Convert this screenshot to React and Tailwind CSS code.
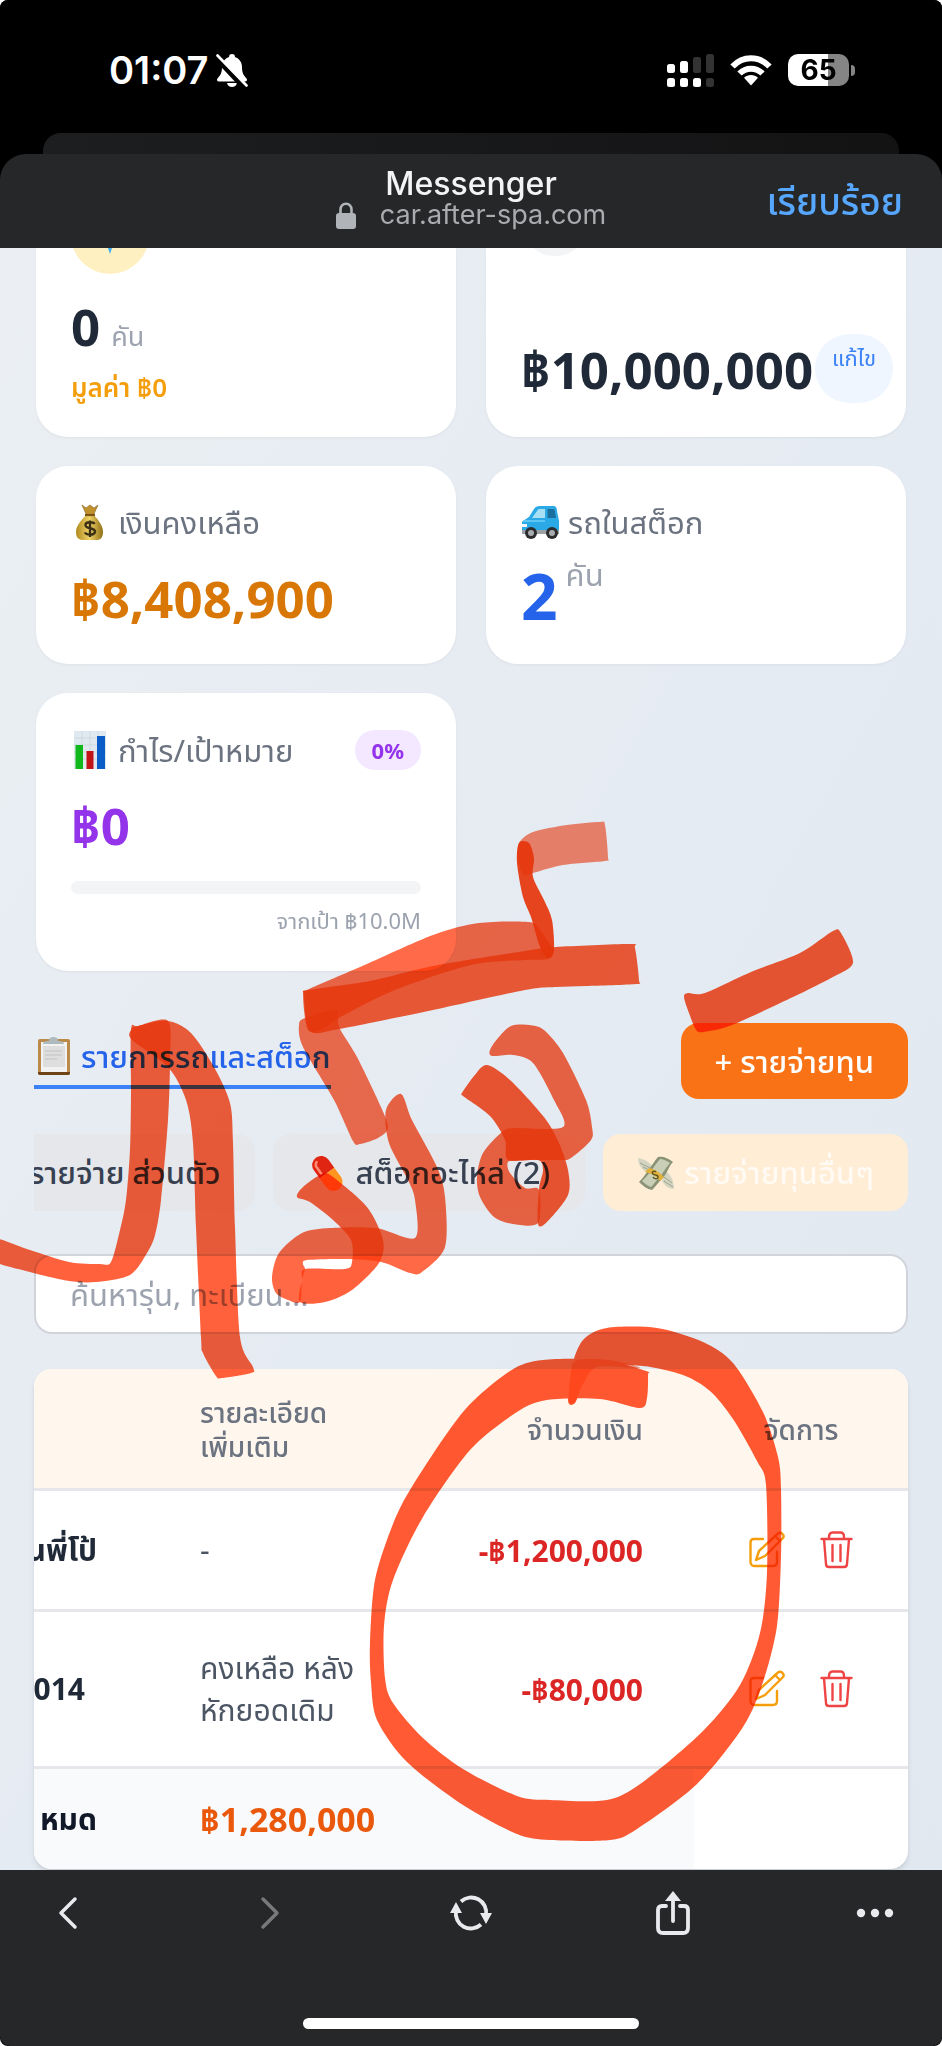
const EXPENSES = [
  { id: 1, name: 'นพี่โป้', nameClass: '', detail: ['-'], amount: '-฿1,200,000' },
  { id: 2, name: '014', nameClass: 'pr-[12px]', detail: ['คงเหลือ หลัง', 'หักยอดเดิม'], amount: '-฿80,000' },
];

// Closed marker outlines, in page coordinates
const INK = [
  {
    opacity: 0.8,
    pts: [[-8, 1238], [30, 1250], [69, 1262], [100, 1264], [111, 1262], [120, 1230], [126, 1200], [130, 1150], [131, 1093], [131, 1030], [138, 1026], [168, 1021], [170, 1060], [168, 1120], [161, 1200], [155, 1235], [147, 1253], [130, 1275], [96, 1282], [69, 1281], [30, 1272], [-8, 1260]],
  },
  {
    opacity: 0.8,
    pts: [[131, 1030], [138, 1026], [168, 1021], [191, 1033], [214, 1067], [230, 1103], [233, 1143], [235, 1227], [240, 1337], [253, 1367], [251, 1373], [222, 1378], [216, 1376], [203, 1353], [201, 1337], [196, 1227], [193, 1143], [186, 1100], [168, 1067], [132, 1040]],
  },
  {
    opacity: 0.72,
    pts: [[305, 1018], [299, 1025], [303, 1047], [334, 1100], [353, 1141], [360, 1144], [378, 1138], [388, 1128], [381, 1107], [357, 1057], [339, 1027], [336, 1010]],
  },
  {
    opacity: 0.75,
    pts: [[303, 994], [309, 989], [360, 967], [433, 935], [479, 923], [529, 922], [540, 930], [553, 950], [548, 959], [525, 960], [471, 965], [395, 990], [339, 1018], [325, 1028], [308, 1030]],
  },
  {
    opacity: 0.82,
    pts: [[304, 995], [309, 990], [370, 981], [433, 966], [525, 951], [556, 947], [630, 944], [635, 948], [639, 980], [636, 984], [586, 986], [556, 987], [525, 990], [433, 1010], [339, 1029], [310, 1031]],
  },
  {
    opacity: 0.6,
    pts: [[533, 873], [563, 865], [605, 861], [608, 857], [605, 825], [600, 822], [567, 825], [533, 832], [519, 843], [518, 860], [524, 875]],
  },
  {
    opacity: 0.92,
    pts: [[519, 843], [529, 843], [534, 858], [533, 877], [544, 900], [552, 920], [554, 950], [548, 958], [540, 947], [531, 917], [523, 897], [517, 863]],
  },
  {
    opacity: 0.84,
    pts: [[684, 997], [688, 993], [705, 993], [751, 972], [800, 953], [833, 931], [841, 933], [853, 963], [831, 978], [793, 997], [732, 1025], [709, 1031], [697, 1031], [689, 1013]],
  },
  {
    opacity: 0.76,
    pts: [[386, 1110], [401, 1094], [412, 1120], [437, 1167], [445, 1197], [445, 1247], [422, 1272], [410, 1273], [381, 1262], [345, 1259], [307, 1260], [303, 1264], [305, 1269], [302, 1280], [300, 1302], [288, 1300], [276, 1293], [272, 1277], [279, 1253], [302, 1233], [330, 1228], [376, 1228], [415, 1238], [415, 1200], [408, 1180], [389, 1143]],
  },
  {
    opacity: 0.8,
    pts: [[297, 1197], [303, 1187], [322, 1174], [333, 1177], [367, 1207], [383, 1240], [379, 1263], [352, 1290], [325, 1302], [300, 1302], [302, 1280], [305, 1269], [345, 1269], [352, 1262], [351, 1240], [333, 1220], [310, 1202]],
  },
  {
    opacity: 0.76,
    pts: [[490, 1050], [498, 1038], [511, 1026], [529, 1025], [544, 1030], [563, 1053], [586, 1100], [592, 1127], [591, 1140], [571, 1158], [559, 1160], [520, 1160], [508, 1162], [510, 1173], [525, 1188], [539, 1190], [538, 1223], [513, 1224], [494, 1217], [480, 1197], [477, 1177], [483, 1153], [502, 1132], [515, 1128], [563, 1127], [554, 1100], [533, 1063], [513, 1055], [492, 1056]],
  },
  {
    opacity: 0.84,
    pts: [[462, 1093], [474, 1076], [487, 1065], [510, 1080], [544, 1117], [559, 1143], [568, 1170], [568, 1195], [547, 1222], [538, 1224], [539, 1189], [543, 1170], [538, 1160], [508, 1160], [505, 1140], [490, 1116], [463, 1096]],
  },
  {
    opacity: 0.84,
    pts: [[568, 1401], [572, 1366], [583, 1340], [607, 1328], [657, 1328], [703, 1342], [733, 1363], [763, 1412], [778, 1457], [781, 1489], [781, 1556], [777, 1626], [763, 1682], [743, 1727], [697, 1784], [637, 1829], [610, 1840], [550, 1840], [517, 1834], [463, 1805], [407, 1762], [377, 1720], [371, 1682], [370, 1643], [375, 1580], [393, 1524], [413, 1485], [463, 1412], [510, 1371], [543, 1360], [603, 1360], [646, 1371], [648, 1375], [647, 1398], [640, 1408], [600, 1399], [547, 1400], [517, 1412], [470, 1450], [423, 1517], [393, 1580], [384, 1626], [385, 1678], [393, 1703], [423, 1738], [463, 1769], [517, 1796], [550, 1800], [607, 1800], [643, 1782], [703, 1731], [740, 1685], [760, 1633], [767, 1573], [766, 1485], [757, 1461], [733, 1419], [710, 1391], [683, 1375], [643, 1366], [597, 1366], [583, 1384], [575, 1403]],
  },
  {
    opacity: 0.5,
    pts: [[569, 1400], [571, 1372], [577, 1360], [610, 1360], [640, 1368], [597, 1367], [583, 1384], [575, 1402]],
  },
];

function smoothPath(pts) {
  const n = pts.length;
  let d = `M${pts[0][0]} ${pts[0][1]}`;
  for (let i = 0; i < n; i++) {
    const [a, b, c, e] = [pts[(i - 1 + n) % n], pts[i], pts[(i + 1) % n], pts[(i + 2) % n]];
    d += `C${b[0] + (c[0] - a[0]) / 7} ${b[1] + (c[1] - a[1]) / 7} ${c[0] - (e[0] - b[0]) / 7} ${c[1] - (e[1] - b[1]) / 7} ${c[0]} ${c[1]}`;
  }
  return d + 'Z';
}

export default function App() {
  return (
    <div className="relative min-h-screen flex flex-col overflow-hidden rounded-[8px] bg-black font-['Noto_Sans','Noto_Sans_Thai','Sarabun','Loma',sans-serif]">
      <StatusBar />
      <SheetHeader />

      <main className="flex-1 bg-linear-to-br from-[#ebeff3] via-[#e5ebf2] to-[#e1e8f0] px-[34px]">
        <div className="grid grid-cols-2 gap-x-[30px] gap-y-[29px] px-[2px]">
          {/* Sold cars */}
          <div className="bg-white rounded-b-[32px] px-[35px] pb-[30px] shadow-[0_1px_3px_rgba(0,0,0,0.05)]">
            <div className="h-[26px] overflow-hidden flex flex-col justify-end">
              <div className="w-[78px] h-[78px] shrink-0 rounded-full bg-[#fef0c0] flex flex-col items-center justify-end pb-[20px]">
                <svg width="12" height="18" viewBox="0 0 12 18" aria-hidden="true"><path d="M0 0H12L6 18Z" fill="#38aef5" /></svg>
              </div>
            </div>
            <p className="mt-[22px] h-[64px] flex items-baseline gap-[11px] leading-[60px]">
              <span className="text-[51px] font-bold text-[#1f2937]">0</span>
              <span className="text-[27px] text-[#9ca3af]">คัน</span>
            </p>
            <p className="mt-[7px] text-[26px] leading-[40px] font-semibold text-[#f59e0b]">มูลค่า ฿0</p>
          </div>

          {/* Capital */}
          <div className="bg-white rounded-b-[32px] pl-[35px] pr-[13px] pb-[33px] shadow-[0_1px_3px_rgba(0,0,0,0.05)]">
            <div className="h-[8px] overflow-hidden flex flex-col justify-end">
              <div className="w-[68px] h-[68px] shrink-0 rounded-full bg-gray-100" />
            </div>
            <div className="mt-[77px] flex items-center justify-between h-[71px]">
              <p className="text-[51px] leading-[64px] font-bold text-[#1f2937]">฿10,000,000</p>
              <button className="w-[78px] h-[69px] shrink-0 rounded-full bg-[#eff6ff] text-[#3b82f6] text-[22px] leading-[30px] pb-[24px]">แก้ไข</button>
            </div>
          </div>

          {/* Balance */}
          <div className="bg-white rounded-[32px] px-[35px] pt-[31px] pb-[34px] shadow-[0_1px_3px_rgba(0,0,0,0.05)]">
            <h3 className="flex items-center gap-[10px] text-[31px] leading-[50px] text-[#6b7280]">
              <MoneyBagIcon /> เงินคงเหลือ
            </h3>
            <p className="mt-[19px] text-[51px] leading-[64px] font-bold text-[#d97706]">฿8,408,900</p>
          </div>

          {/* Cars in stock */}
          <div className="bg-white rounded-[32px] px-[35px] pt-[31px] pb-[34px] shadow-[0_1px_3px_rgba(0,0,0,0.05)]">
            <h3 className="flex items-center gap-[8px] text-[31px] leading-[50px] text-[#6b7280]">
              <CarIcon /> รถในสต็อก
            </h3>
            <p className="mt-[15px] flex gap-[8px]">
              <span className="text-[64px] leading-[68px] font-bold text-[#2563eb]">2</span>
              <span className="text-[31px] leading-[24px] text-[#9ca3af]">คัน</span>
            </p>
          </div>

          {/* Profit / target */}
          <div className="bg-white rounded-[32px] px-[35px] pt-[32px] pb-[32px] shadow-[0_1px_3px_rgba(0,0,0,0.05)]">
            <div className="flex items-center justify-between">
              <h3 className="flex items-center gap-[10px] text-[31px] leading-[50px] text-[#6b7280]">
                <ChartIcon /> กำไร/เป้าหมาย
              </h3>
              <span className="rounded-full bg-[#f3e8ff] px-[17px] text-[22px] leading-[40px] font-bold text-[#9333ea]">0%</span>
            </div>
            <p className="mt-[18px] text-[51px] leading-[64px] font-bold text-[#9333ea]">฿0</p>
            <div className="mt-[24px] h-[13px] rounded-full bg-[#f3f4f6]" />
            <p className="mt-[7px] text-right text-[22px] leading-[38px] text-[#9ca3af]">จากเป้า ฿10.0M</p>
          </div>
        </div>

        <div className="mt-[52px] flex items-center justify-between">
          <a href="#stock" className="flex items-center gap-[10px] border-b-4 border-[#3b82f6] pb-[6px] text-[31px] leading-[46px] font-medium text-[#2563eb]">
            <ClipboardIcon /> รายการรถและสต็อก
          </a>
          <button className="rounded-[18px] bg-[#f97316] px-[34px] text-[31px] leading-[76px] font-medium text-white">+ รายจ่ายทุน</button>
        </div>

        <div className="mt-[35px] flex justify-end gap-[18px] overflow-hidden whitespace-nowrap text-[31px] leading-[77px] font-medium">
          <button className="shrink-0 rounded-[18px] bg-[#e5e7eb] px-[35px] text-[#374151]">รายจ่าย ส่วนตัว</button>
          <button className="shrink-0 flex items-center gap-[10px] rounded-[18px] bg-[#e5e7eb] px-[35px] text-[#374151]">
            <PillIcon /> สต็อกอะไหล่ (2)
          </button>
          <button className="shrink-0 flex items-center gap-[9px] rounded-[18px] bg-[#ffedd5] px-[34px] text-[#fffaf3]">
            <FlyingMoneyIcon /> รายจ่ายทุนอื่นๆ
          </button>
        </div>

        <input
          type="text"
          aria-label="ค้นหา"
          placeholder="ค้นหารุ่น, ทะเบียน..."
          className="mt-[43px] block h-[80px] w-full rounded-[18px] border-2 border-[#d1d5db] bg-white px-[34px] text-[31px] text-[#374151] placeholder:text-[#9ca3af]"
        />

        <div className="mt-[35px] overflow-hidden rounded-[18px] bg-white shadow-md">
          <table className="w-full table-fixed border-separate border-spacing-0 text-left">
            <colgroup>
              <col className="w-[131px]" />
              <col className="w-[220px]" />
              <col />
              <col className="w-[214px]" />
            </colgroup>
            <thead>
              <tr className="bg-[#fff7ed] text-[28px] leading-[34px] text-[#6b7280]">
                <th className="border-b-[3px] border-[#e5e7eb]" />
                <th className="h-[122px] border-b-[3px] border-[#e5e7eb] pl-[35px] font-medium">รายละเอียด<br />เพิ่มเติม</th>
                <th className="border-b-[3px] border-[#e5e7eb] pr-[51px] text-right font-medium">จำนวนเงิน</th>
                <th className="border-b-[3px] border-[#e5e7eb] text-center font-medium">จัดการ</th>
              </tr>
            </thead>
            <tbody>
              {EXPENSES.map((item) => (
                <tr key={item.id}>
                  <td className="border-b-[3px] border-[#e5e7eb]">
                    <div className={`flex w-[63px] justify-end overflow-hidden whitespace-nowrap text-[30px] leading-[50px] font-bold text-[#1f2937] ${item.nameClass}`}>
                      {item.name}
                    </div>
                  </td>
                  <td className="h-[121px] border-b-[3px] border-[#e5e7eb] py-[35px] pl-[35px] text-[30px] leading-[42px] text-[#4b5563] whitespace-nowrap">
                    {item.detail.map((line) => <p key={line}>{line}</p>)}
                  </td>
                  <td className="border-b-[3px] border-[#e5e7eb] pr-[51px] text-right text-[30px] font-bold text-[#dc2626] whitespace-nowrap">{item.amount}</td>
                  <td className="border-b-[3px] border-[#e5e7eb]">
                    <div className="flex justify-center gap-[35px]">
                      <button aria-label="แก้ไข" className="text-[#f59e0b]"><EditIcon /></button>
                      <button aria-label="ลบ" className="text-[#ef4444]"><TrashIcon /></button>
                    </div>
                  </td>
                </tr>
              ))}
              <tr>
                <td className="h-[100px] bg-[#f8fafc]">
                  <div className="flex w-[63px] justify-end whitespace-nowrap text-[30px] leading-[50px] font-bold text-[#111827]">หมด</div>
                </td>
                <td colSpan={2} className="bg-[#f8fafc] pl-[35px] text-[34px] font-bold text-[#ea580c]">฿1,280,000</td>
                <td />
              </tr>
            </tbody>
          </table>
        </div>
      </main>

      <BottomBar />

      {/* Marker scribble */}
      <svg viewBox="0 0 942 2046" className="pointer-events-none absolute top-0 left-0 w-full mix-blend-multiply" aria-hidden="true">
        {INK.map((s, i) => (
          <path key={i} d={smoothPath(s.pts)} fill="#ff3a0c" fillOpacity={s.opacity} />
        ))}
      </svg>
    </div>
  );
}

function StatusBar() {
  return (
    <header className="bg-black font-['Inter',sans-serif] text-white">
      <div className="flex h-[133px] items-center justify-between pt-[7px] pr-[87px] pl-[109px]">
        <div className="flex items-center gap-[8px]">
          <span className="text-[38px] leading-[44px] font-semibold">01:07</span>
          <svg width="32" height="34" viewBox="0 0 32 34" aria-hidden="true">
            <path d="M16 1c-2 0-3 1.300-3 3C8.500 5.500 6 9.500 6 14c0 6-1.500 8-4.500 11.500-1 1.500-.5 3 1.500 3h26c2 0 2.500-1.500 1.500-3C27.500 22 26 20 26 14c0-4.500-2.500-8.500-7-10 0-1.700-1-3-3-3Z" fill="#fff" />
            <path d="M11 30h10c-.5 2.500-2.500 4-5 4s-4.500-1.500-5-4Z" fill="#fff" />
            <path d="M0 4 29 35" stroke="#000" strokeWidth="6" />
            <path d="M1.500 2.500 30.500 32.500" stroke="#fff" strokeWidth="2.600" strokeLinecap="round" />
          </svg>
        </div>
        <div className="flex items-center gap-[16px]">
          <svg width="47" height="33" viewBox="0 0 47 33" aria-hidden="true">
            <g fill="#fff">
              <rect x="0" y="10" width="8" height="9" rx="2.500" />
              <rect x="13" y="7" width="8" height="12" rx="2.500" />
              <rect x="0" y="24" width="8" height="9" rx="2.500" />
              <rect x="13" y="24" width="8" height="9" rx="2.500" />
              <rect x="26" y="24" width="8" height="9" rx="2.500" />
            </g>
            <g fill="#333">
              <rect x="26" y="3" width="8" height="16" rx="2.500" />
              <rect x="39" y="0" width="8" height="19" rx="2.500" />
              <rect x="39" y="24" width="8" height="9" rx="2.500" />
            </g>
          </svg>
          <svg width="42" height="31" viewBox="0 0 42 31" fill="none" stroke="#fff" strokeWidth="6" aria-hidden="true">
            <path d="M2.500 11.500C13 .5 29 .5 39.500 11.500" />
            <path d="M9.500 18.500C16 12 26 12 32.500 18.500" />
            <path d="M14 22.800c4-3.700 10-3.700 14 0L21 30.500Z" fill="#fff" stroke="none" />
          </svg>
          <div className="flex items-center gap-[2px]">
            <div className="flex h-[32px] w-[61px] items-center justify-center rounded-[10px] bg-linear-to-r from-white from-65% to-[#858585] to-65% text-[28px] leading-[32px] font-bold text-black">65</div>
            <div className="h-[11px] w-[4px] rounded-r-full bg-[#858585]" />
          </div>
        </div>
      </div>
      <div className="mx-[43px] h-[21px] rounded-t-[18px] bg-linear-to-r from-[#1d1e20] to-[#131314]" />
    </header>
  );
}

function SheetHeader() {
  return (
    <div className="grid h-[94px] grid-cols-[1fr_auto_1fr] items-center rounded-t-[26px] bg-[#252729]">
      <span />
      <div className="pb-[7px] text-center font-['Inter',sans-serif]">
        <h1 className="text-[32px] leading-[35px] font-medium text-gray-100">Messenger</h1>
        <p className="flex items-center justify-center gap-[24px] text-[27px] leading-[28px] text-[#a9abae]">
          <svg width="20" height="27" viewBox="0 0 20 27" aria-hidden="true">
            <rect x="0" y="11" width="20" height="16" rx="3" fill="#b0b3b8" />
            <path d="M4.500 12V7.500C4.500 4 6.800 1.800 10 1.800S15.500 4 15.500 7.500V12" fill="none" stroke="#b0b3b8" strokeWidth="2.600" />
          </svg>
          car.after-spa.com
        </p>
      </div>
      <button className="justify-self-end pr-[39px] text-[37px] leading-[50px] font-medium text-[#57a7ff]">เรียบร้อย</button>
    </div>
  );
}

function BottomBar() {
  return (
    <footer className="flex h-[176px] flex-col items-center justify-between rounded-b-[10px] bg-[#252729] pb-[17px]">
      <nav className="flex h-[86px] w-full items-center justify-between px-[45px] text-[#e8eaed]">
        <button aria-label="Back" className="flex w-[44px] justify-center">
          <svg width="38" height="38" viewBox="0 0 38 38" fill="none" stroke="currentColor" strokeWidth="3.500" strokeLinecap="round" strokeLinejoin="round"><path d="M27 5 13 19l14 14" /></svg>
        </button>
        <button aria-label="Forward" className="flex w-[44px] justify-center text-[#77797b]">
          <svg width="38" height="38" viewBox="0 0 38 38" fill="none" stroke="currentColor" strokeWidth="3.500" strokeLinecap="round" strokeLinejoin="round"><path d="m13 5 14 14-14 14" /></svg>
        </button>
        <button aria-label="Reload" className="flex w-[44px] justify-center">
          <svg width="44" height="38" viewBox="0 0 44 38" fill="none" stroke="currentColor" strokeWidth="3.800">
            <path d="M12 7.500A15 15 0 0 1 37 21" />
            <path d="M32 30.500A15 15 0 0 1 7 17" />
            <path d="M31 19h12l-6 11Z M1 19h12L7 8Z" fill="currentColor" stroke="none" />
          </svg>
        </button>
        <button aria-label="Share" className="flex w-[44px] justify-center">
          <svg width="36" height="46" viewBox="0 0 36 46" fill="none" stroke="currentColor" strokeWidth="3.800" strokeLinecap="round" strokeLinejoin="round">
            <path d="M11 16H7c-3 0-4 1.500-4 4v18c0 3 1.500 5 5 5h20c3.500 0 5-2 5-5V20c0-2.500-1-4-4-4h-4" />
            <path d="M18 31V8" />
            <path d="M10 11 18 1l8 10Z" fill="currentColor" stroke="none" />
          </svg>
        </button>
        <button aria-label="More" className="flex w-[44px] justify-center">
          <svg width="38" height="10" viewBox="0 0 38 10" fill="currentColor"><circle cx="5" cy="5" r="4.200" /><circle cx="19" cy="5" r="4.200" /><circle cx="33" cy="5" r="4.200" /></svg>
        </button>
      </nav>
      <div className="h-[11px] w-[336px] rounded-full bg-white" />
    </footer>
  );
}

function EditIcon() {
  return (
    <svg width="36" height="38" viewBox="0 0 36 38" fill="none" stroke="currentColor" strokeWidth="2.400" strokeLinecap="round" strokeLinejoin="round">
      <path d="M14 8H5C3 8 1.500 9.500 1.500 11.500V31C1.500 33 3 35 5 35H24C26.500 35 28 33.500 28 31V21" />
      <path d="M7 29 10 20 29 2.500C32 .5 36 4 34 7L16 25Z" />
      <path d="m26 5 5 5" />
    </svg>
  );
}

function TrashIcon() {
  return (
    <svg width="33" height="38" viewBox="0 0 33 38" fill="none" stroke="currentColor" strokeWidth="2.400" strokeLinecap="round" strokeLinejoin="round">
      <path d="M1.500 8h30M9 8V6c0-3 1.500-4.500 3.500-4.500h8C22.500 1.500 24 3 24 6v2M4 8l2 25c0 2 1.500 3 3 3h15c1.500 0 3-1 3-3L29 8M12.500 14v16M20.500 14v16" />
    </svg>
  );
}

function MoneyBagIcon() {
  return (
    <svg width="37" height="37" viewBox="0 0 37 37" aria-hidden="true">
      <defs>
        <linearGradient id="bag" x1="0" x2="1"><stop offset="0" stopColor="#b08a1e" /><stop offset=".5" stopColor="#f0d268" /><stop offset="1" stopColor="#8f6f14" /></linearGradient>
      </defs>
      <path d="M11 1l4 3 4-3 4 3 4-3-5 11h-6Z" fill="#c0912c" stroke="#84601a" strokeWidth=".6" />
      <path d="M15 11h8c2 3 9 9 9 17 0 6-3 8-6 8H12c-4 0-7-2-7-8 0-8 8-14 10-17Z" fill="url(#bag)" />
      <path d="M14 11h10" stroke="#7c5418" strokeWidth="2.200" />
      <path d="M23.500 20c-1-2-9-3-9 1.200 0 4 9.500 2 9.500 6.300 0 4.500-9 3.500-10 .8M19 16.500V33" fill="none" stroke="#3b3014" strokeWidth="2.400" />
    </svg>
  );
}

function CarIcon() {
  return (
    <svg width="39" height="34" viewBox="0 0 39 34" aria-hidden="true">
      <path d="M2 16 8 12 13 4c1-2 3-3 6-3h13c3 0 4 2 4 5l2 10v11H1V18c0-1 0-2 1-2Z" fill="#2aa9e6" />
      <path d="M11 13 16 6c1-2 2-2 4-2h4v9Z" fill="#a7e0f4" />
      <path d="M26.500 4H32c1.500 0 2 1 2 3l1 6h-8.500Z" fill="#1b6f9c" />
      <path d="M2 16h22" stroke="#6fd0f7" strokeWidth="1.500" />
      <path d="M1 25h37v4H1Z" fill="#9aa0a4" />
      <path d="M1 19h5v3H1Z" fill="#eef6fa" />
      <circle cx="10" cy="28" r="6" fill="#2c2c2e" /><circle cx="10" cy="28" r="3" fill="#a9adb0" />
      <circle cx="31" cy="28" r="6" fill="#2c2c2e" /><circle cx="31" cy="28" r="3" fill="#a9adb0" />
    </svg>
  );
}

function ChartIcon() {
  return (
    <svg width="37" height="38" viewBox="0 0 37 38" aria-hidden="true">
      <path d="M3 0h32v38H3Z" fill="#dfe9ef" />
      <path d="M3 7h32M3 14h32M3 21h32M3 28h32M11 0v38M19 0v38M27 0v38" stroke="#c8d6de" strokeWidth=".8" />
      <path d="M4.500 14h7.500v24H4.500Z" fill="#10b81c" />
      <path d="M15.500 20h7v18h-7Z" fill="#c01418" />
      <path d="M26 5h8v33h-8Z" fill="#0c5cc8" />
    </svg>
  );
}

function ClipboardIcon() {
  return (
    <svg width="37" height="38" viewBox="0 0 37 38" aria-hidden="true">
      <rect x="4" y="2" width="32" height="36" rx="2" fill="#b98a48" />
      <path d="M4 35h32v1q0 2-2 2H6q-2 0-2-2Z" fill="#6d4318" />
      <path d="M7 5h26v30H7Z" fill="#f2f2f2" />
      <path d="M9 9h22v21H9Z" fill="#dedede" />
      <path d="M11 14h17M11 18h17M11 22h12" stroke="#cbcbcb" strokeWidth="1.500" />
      <path d="M9 7c0-3 4-3 6-3 0-3 1.500-4 4.500-4S24 1 24 4c2 0 6 0 6 3Z" fill="#aebabd" />
    </svg>
  );
}

function PillIcon() {
  return (
    <svg width="37" height="40" viewBox="0 0 37 40" aria-hidden="true">
      <g transform="rotate(-36 19 20)">
        <path d="M10 20V10a9 9 0 0 1 18 0v10Z" fill="#e02612" />
        <path d="M10 20V31a9 9 0 0 0 18 0V20Z" fill="#ff941f" />
        <path d="M14 17V9c0-2 1-3 3-4" stroke="#ff8b75" strokeWidth="2.500" fill="none" strokeLinecap="round" />
      </g>
    </svg>
  );
}

function FlyingMoneyIcon() {
  return (
    <svg width="38" height="34" viewBox="0 0 38 34" aria-hidden="true">
      <path d="M1 2c6 1 12 4 15 9l-5 6C5 14 1 9 1 2ZM37 33c-5 0-9-3-12-8l4-10c5 4 8 10 8 18Z" fill="#d3d5c2" />
      <path d="M3 7l10 5M6 11l6 3M35 27l-8-6M36 31l-9-6" stroke="#9da18c" strokeWidth="1" />
      <path d="M21 1c5-1 10 1 15 5-5 5-6 13-13 19-3 3-6 7-8 9-5-1-9-4-13-8C9 19 15 8 21 1Z" fill="#8b9377" />
      <path d="M23 3c3 0 7 2 10 4-5 5-7 11-12 16-3 3-4 5-7 8-3-1-6-3-9-6 7-6 12-15 18-22Z" fill="#c9cfb6" />
      <path d="M12 12c6 1 11 5 15 9l-4 4C19 20 14 17 8 16Z" fill="#e2b13c" />
      <path d="M19 16c-2-2-5 0-3 2s5 0 5 3-4 2-5 0" fill="none" stroke="#54501f" strokeWidth="1.400" />
    </svg>
  );
}
